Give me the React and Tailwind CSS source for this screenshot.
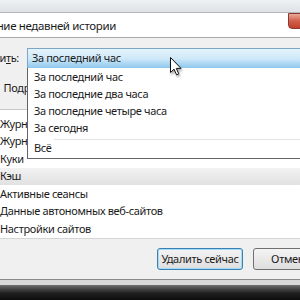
import { useState } from 'react'

// пункты выпадающего списка "Удалить"
const periods = ['За последний час', 'За последние два часа', 'За последние четыре часа', 'За сегодня']

// что удаляем
const items = [
  'Журнал посещений и загрузок',
  'Журнал форм и поиска',
  'Куки',
  'Кэш',
  'Активные сеансы',
  'Данные автономных веб-сайтов',
  'Настройки сайтов',
]

function Cursor() {
  return (
    <svg
      className="absolute left-[170px] top-[57px] drop-shadow-[1px_2px_1px_rgba(0,0,0,0.35)]"
      width="13"
      height="19"
      viewBox="0 0 13 19"
    >
      <path d="M0.5 0.5 L0.5 15.5 L4 12.2 L6.6 17.8 L8.8 16.8 L6.3 11.4 L11 11.4 Z" fill="#fff" stroke="#111" strokeWidth="1" strokeLinejoin="round" />
    </svg>
  )
}

export default function App() {
  const [selected] = useState(3) // подсвеченная строка "Кэш"

  return (
    <div className="relative w-[300px] h-[300px] overflow-hidden bg-[#f0f0f0] text-[11px] tracking-[-0.35px] text-[#1b1b1b] font-['Noto_Sans',sans-serif]">
      {/* рамка окна сверху */}
      <div className="h-[13px] bg-gradient-to-b from-[#eef0f2] to-[#dfe2e6] border-b border-[#b4b6b9]" />

      {/* заголовок */}
      <div className="h-[25px] bg-white border-b border-[#a8a8a8] flex">
        <span className="ml-[-34px] mt-[4px] text-[11.5px] whitespace-nowrap">Удаление недавней истории</span>
        <div className="ml-auto mr-[-30px] w-[42px] h-[16px] rounded-bl-[4px] border border-[#8a3a30] bg-gradient-to-b from-[#e9a89a] via-[#d0604b] to-[#c2402a]" />
      </div>

      {/* выбор периода */}
      <div className="flex mt-[10px] h-[20px]">
        <label className="ml-[-24px] w-[51px] shrink-0 flex items-center whitespace-nowrap">
          Удали<span className="underline">т</span>ь:
        </label>
        <div className="flex-1 mr-[-10px] flex items-center pl-[4px] border-t border-l border-[#7ba6c6] border-b-[#222] bg-gradient-to-b from-[#e4f3fc] via-[#cfe9f9] to-[#8cc7ec]">
          За последний час
        </div>
      </div>

      {/* подробности */}
      <div className="h-[41px] flex items-center pl-[4px]">
        <span className="ml-[-14px] mr-[5px] text-[9px] text-[#555]">▼</span>
        Подробности
      </div>

      {/* список */}
      <div className="h-[129px] bg-white border-t border-[#c8c8c8] pt-[5px] ml-[-20px]">
        {items.map((item, i) => (
          <div
            key={item}
            className={`h-[17.5px] flex items-center gap-[4px] pl-[3px] whitespace-nowrap ${
              i === selected ? 'bg-gradient-to-b from-[#f2f2f2] to-[#e1e1e1]' : ''
            }`}
          >
            <span className="w-[13px] h-[13px] border border-[#8e8f8f] bg-gradient-to-br from-[#dcdcdc] to-white" />
            {item}
          </div>
        ))}
      </div>

      {/* кнопки */}
      <div className="h-[42px] border-t border-[#d5d5d5] border-b border-b-[#8a8a8a] flex items-start pt-[9px] pl-[157px] gap-[10px]">
        <button className="w-[86px] h-[22px] shrink-0 rounded-[3px] border border-[#3c7fb1] shadow-[inset_0_0_0_1px_#9fdcf8] bg-gradient-to-b from-[#f4f4f4] to-[#dedede] text-[11px] whitespace-nowrap text-[#1b1b1b]">
          Удалить сейчас
        </button>
        <button className="w-[75px] h-[22px] shrink-0 rounded-[3px] border border-[#707070] bg-gradient-to-b from-[#f4f4f4] to-[#dedede] text-[11px] whitespace-nowrap text-[#1b1b1b]">
          Отмена
        </button>
      </div>

      {/* тень под окном */}
      <div className="h-[5px] bg-[#d9d9d9]" />
      <div className="h-[16px] bg-gradient-to-b from-[#707070] via-[#202020] to-[#0a0a0a]" />

      {/* раскрытый список периодов */}
      <div className="absolute left-[27px] top-[68px] w-[290px] h-[91px] bg-white border-l border-b border-[#646464] pt-[1px]">
        {periods.map((p) => (
          <div key={p} className="h-[17px] flex items-center pl-[6px] whitespace-nowrap">
            {p}
          </div>
        ))}
        <div className="ml-[26px] mt-[2px] border-t border-[#e2e2e2]" />
        <div className="h-[17px] flex items-center pl-[6px]">Всё</div>
      </div>

      <Cursor />
    </div>
  )
}
